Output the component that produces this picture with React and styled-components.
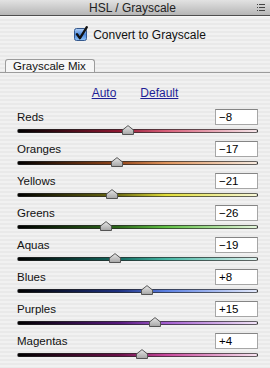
import React from "react";
import styled, { createGlobalStyle } from "styled-components";

const CHANNELS = [
  { name: "Reds", value: -8, mid: "#8e1832", hi: "#d8607a", end: "#f6e6ea" },
  { name: "Oranges", value: -17, mid: "#94461a", hi: "#e0955e", end: "#f8ebe0" },
  { name: "Yellows", value: -21, mid: "#6e6c12", hi: "#e2df3a", end: "#f8f8d8" },
  { name: "Greens", value: -26, mid: "#2e6a1c", hi: "#62c246", end: "#e4f6dc" },
  { name: "Aquas", value: -19, mid: "#136a60", hi: "#46b8a6", end: "#e0f4f0" },
  { name: "Blues", value: 8, mid: "#1e3080", hi: "#5c80e2", end: "#e4eafc" },
  { name: "Purples", value: 15, mid: "#56187c", hi: "#a45ed0", end: "#f2e4f8" },
  { name: "Magentas", value: 4, mid: "#6a1048", hi: "#c8489c", end: "#f8e4f0" },
];

const formatValue = (v) => (v > 0 ? `+${v}` : v < 0 ? `\u2212${-v}` : "0");

const App = () => {
  return (
    <>
      <GlobalStyle />
      <Panel>
        <TitleBar>
          <TitleText>HSL / Grayscale</TitleText>
          <MenuIcon width="8" height="7" viewBox="0 0 8 7">
            <rect x="0" y="0" width="1" height="1" fill="#444" />
            <rect x="2" y="0" width="6" height="1" fill="#444" />
            <rect x="0" y="3" width="1" height="1" fill="#444" />
            <rect x="2" y="3" width="6" height="1" fill="#444" />
            <rect x="0" y="6" width="1" height="1" fill="#444" />
            <rect x="2" y="6" width="6" height="1" fill="#444" />
          </MenuIcon>
        </TitleBar>
        <Body>
          <CheckRow>
            <CheckBox width="15" height="16" viewBox="0 0 15 16">
              <defs>
                <linearGradient id="cbfill" x1="0" y1="0" x2="0" y2="1">
                  <stop offset="0" stopColor="#b8d4f6" />
                  <stop offset="0.5" stopColor="#4c88dc" />
                  <stop offset="1" stopColor="#92c4f8" />
                </linearGradient>
              </defs>
              <rect x="0.5" y="2.5" width="12" height="12" rx="2" fill="url(#cbfill)" stroke="#35598e" />
              <path d="M3 8.2 L6 12.2 L12.8 1.2" stroke="#111" strokeWidth="2.3" fill="none" strokeLinecap="round" strokeLinejoin="round" />
            </CheckBox>
            <CheckLabel>Convert to Grayscale</CheckLabel>
          </CheckRow>
          <TabStrip>
            <Tab>Grayscale Mix</Tab>
          </TabStrip>
          <Links>
            <LinkText>Auto</LinkText>
            <LinkText>Default</LinkText>
          </Links>
          <Rows>
            {CHANNELS.map((ch) => (
              <Row key={ch.name}>
                <RowHead>
                  <Label>{ch.name}</Label>
                  <ValueBox>{formatValue(ch.value)}</ValueBox>
                </RowHead>
                <Track mid={ch.mid} hi={ch.hi} end={ch.end}>
                  <Thumb
                    width="12"
                    height="10"
                    viewBox="0 0 12 10"
                    style={{ left: `${((ch.value + 100) / 200) * 100}%` }}
                  >
                    <defs>
                      <linearGradient id={`th-${ch.name}`} x1="0" y1="0" x2="0" y2="1">
                        <stop offset="0" stopColor="#e8e8e8" />
                        <stop offset="1" stopColor="#a4a4a4" />
                      </linearGradient>
                    </defs>
                    <path
                      d="M0.5 9.5 L0.5 5 L6 0.6 L11.5 5 L11.5 9.5 Z"
                      fill={`url(#th-${ch.name})`}
                      stroke="#555"
                      strokeLinejoin="round"
                    />
                  </Thumb>
                </Track>
              </Row>
            ))}
          </Rows>
        </Body>
      </Panel>
    </>
  );
};

const GlobalStyle = createGlobalStyle`
  html, body {
    margin: 0;
    padding: 0;
    overflow: hidden;
  }
  body {
    font-family: "Liberation Sans", Arial, sans-serif;
  }
`;

const Panel = styled.div`
  display: flex;
  flex-direction: column;
  width: 270px;
  height: 368px;
  overflow: hidden;
`;

const TitleBar = styled.div`
  position: relative;
  display: flex;
  align-items: center;
  justify-content: center;
  height: 15px;
  background: linear-gradient(to bottom, #e2e2e2, #b6b6b6);
  border-bottom: 1px solid #4e4e4e;
`;

const TitleText = styled.div`
  font-size: 12px;
  color: #222;
  margin-left: -5px;
`;

const MenuIcon = styled.svg`
  position: absolute;
  right: 5px;
  top: 4px;
`;

const Body = styled.div`
  flex: 1;
  background: repeating-linear-gradient(
    to bottom,
    #f1f1f1 0px,
    #f1f1f1 2px,
    #e9e9e9 2px,
    #e9e9e9 4px
  );
  border-top: 1px solid #f8f8f8;
`;

const CheckRow = styled.div`
  display: flex;
  align-items: center;
  justify-content: center;
  gap: 4px;
  height: 16px;
  margin-top: 10px;
  padding-left: 10px;
`;

const CheckBox = styled.svg`
  display: block;
  margin-top: -2px;
`;

const CheckLabel = styled.span`
  font-size: 12px;
  color: #111;
`;

const TabStrip = styled.div`
  display: flex;
  margin-top: 16px;
  padding-left: 5px;
  border-bottom: 1px solid #9c9c9c;
`;

const Tab = styled.div`
  box-sizing: border-box;
  width: 90px;
  height: 13px;
  padding-left: 7px;
  border: 1px solid #9c9c9c;
  border-bottom: none;
  border-radius: 3px 3px 0 0;
  background: #f6f6f6;
  font-size: 11.5px;
  line-height: 12px;
  color: #111;
`;

const Links = styled.div`
  display: flex;
  justify-content: center;
  gap: 24px;
  height: 14px;
  padding: 13px 0 9px 0;
`;

const LinkText = styled.span`
  font-size: 12px;
  line-height: 14px;
  color: #1e1e96;
  text-decoration: underline;
`;

const Rows = styled.div`
  display: flex;
  flex-direction: column;
  padding: 0 12px 0 17px;
`;

const Row = styled.div`
  height: 32px;
`;

const RowHead = styled.div`
  display: flex;
  align-items: center;
  justify-content: space-between;
  height: 16px;
`;

const Label = styled.span`
  font-size: 11.5px;
  color: #111;
`;

const ValueBox = styled.div`
  box-sizing: border-box;
  width: 43px;
  height: 16px;
  padding-left: 3px;
  border: 1px solid #a6a6a6;
  border-top-color: #858585;
  background: #fff;
  font-size: 11.5px;
  line-height: 14px;
  color: #000;
`;

const Track = styled.div`
  position: relative;
  box-sizing: border-box;
  height: 4px;
  margin-top: 4px;
  border: 1px solid rgba(40, 40, 40, 0.7);
  border-radius: 2px;
  background: ${(p) =>
    `linear-gradient(to right, #000 0%, ${p.mid} 42%, ${p.hi} 62%, ${p.end} 100%)`};
`;

const Thumb = styled.svg`
  position: absolute;
  top: -5px;
  margin-left: -6px;
`;

export default App;
